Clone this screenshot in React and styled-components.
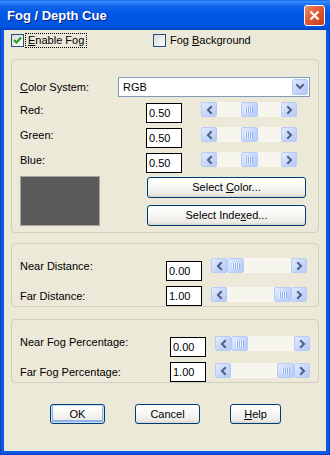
import React from "react";
import styled, { createGlobalStyle } from "styled-components";

const GlobalStyle = createGlobalStyle`
  html, body {
    margin: 0;
    padding: 0;
    background: #ffffff;
  }
  body {
    font-family: "Liberation Sans", Arial, sans-serif;
    font-size: 11px;
    color: #000;
  }
  * {
    box-sizing: border-box;
  }
`;

const Window = styled.div`
  width: 330px;
  height: 455px;
  display: flex;
  flex-direction: column;
  background: #0a3fc4;
`;

const TitleBar = styled.div`
  height: 30px;
  flex: none;
  display: flex;
  align-items: center;
  justify-content: space-between;
  padding: 0 5px 0 7px;
  background: linear-gradient(
    180deg,
    #0a5ee8 0%,
    #3c8ffb 4%,
    #2a7ff5 10%,
    #0f62ea 22%,
    #0056e4 50%,
    #0055e2 80%,
    #0150d8 92%,
    #003fbd 100%
  );
`;

const Title = styled.span`
  color: #fff;
  font-weight: bold;
  font-size: 13px;
  text-shadow: 1px 1px 0 #0a1f8a;
  letter-spacing: 0;
`;

const CloseButton = styled.div`
  width: 21px;
  height: 21px;
  border: 1px solid #fff;
  border-radius: 3px;
  background: linear-gradient(135deg, #ec8b6a 0%, #e05a35 45%, #cb3b17 100%);
  display: flex;
  align-items: center;
  justify-content: center;
`;

const Client = styled.div`
  flex: 1;
  display: flex;
  flex-direction: column;
  background: #ece9d8;
  margin: 0 1px 1px;
  border: 3px solid #0b58e4;
  border-top: 0;
  padding: 4px 7px 0;
`;

const CheckRow = styled.div`
  display: grid;
  grid-template-columns: 142px auto;
  height: 13px;
  align-items: center;
`;

const CheckItem = styled.label`
  display: flex;
  align-items: center;
  gap: 2px;
`;

const Box = styled.span`
  width: 13px;
  height: 13px;
  flex: none;
  border: 1px solid #1c5180;
  background: linear-gradient(135deg, #dcdcd7 0%, #f0f0ec 60%, #ffffff 100%);
  display: flex;
  align-items: center;
  justify-content: center;
`;

const CheckText = styled.span`
  padding: 0 2px;
  line-height: 13px;
  outline: ${(p) => (p.$focus ? "1px dotted #000" : "none")};
  outline-offset: 0;
`;

const Group = styled.div`
  margin-top: ${(p) => p.$mt}px;
  height: ${(p) => p.$h}px;
  flex: none;
  border: 1px solid #d0d0bf;
  border-radius: 4px;
  padding: 17px 8px 0;
  display: flex;
  flex-direction: column;
`;

const ComboRow = styled.div`
  display: flex;
  align-items: center;
  height: 20px;
`;

const Label = styled.span`
  width: ${(p) => p.$w}px;
  flex: none;
  line-height: 13px;
  white-space: nowrap;
  margin-top: ${(p) => p.$dy || 0}px;
`;

const Combo = styled.div`
  width: 192px;
  height: 20px;
  border: 1px solid #7f9db9;
  background: #fff;
  display: flex;
  align-items: center;
  justify-content: space-between;
  padding: 0 1px 0 4px;
`;

const ComboArrow = styled.div`
  width: 16px;
  height: 16px;
  border: 1px solid #b4c8f5;
  border-radius: 2px;
  background: linear-gradient(135deg, #e2ebfe 0%, #c6d6fb 50%, #b3c8f6 100%);
  display: flex;
  align-items: center;
  justify-content: center;
`;

const Row = styled.div`
  display: flex;
  align-items: flex-start;
  height: 20px;
  margin-top: ${(p) => p.$mt}px;
`;

const ValueBox = styled.div`
  width: 36px;
  height: ${(p) => p.$h || 20}px;
  flex: none;
  border: 1px solid #000;
  background: #fff;
  padding: 0 2px;
  line-height: ${(p) => (p.$h || 20) - 2}px;
`;

const ScrollBar = styled.div`
  width: ${(p) => p.$w}px;
  height: 15px;
  flex: none;
  margin-left: ${(p) => p.$ml}px;
  margin-top: ${(p) => p.$dy}px;
  display: flex;
`;

const ScrollArrow = styled.div`
  width: 16px;
  height: 15px;
  flex: none;
  border: 1px solid #b7cbf6;
  border-radius: 2px;
  background: linear-gradient(135deg, #e4ecfe 0%, #c9d8fb 50%, #b6cbf7 100%);
  display: flex;
  align-items: center;
  justify-content: center;
`;

const Track = styled.div`
  flex: 1;
  display: flex;
  background: repeating-conic-gradient(#f1efe4 0 25%, #fcfcf9 0 50%) 0 0 / 2px 2px;
`;

const Spacer = styled.div`
  flex: ${(p) => p.$grow} 1 0;
`;

const Thumb = styled.div`
  width: 17px;
  height: 15px;
  flex: none;
  border: 1px solid #b7cbf6;
  border-radius: 2px;
  background: linear-gradient(135deg, #e4ecfe 0%, #c9d8fb 50%, #b6cbf7 100%);
  display: flex;
  align-items: center;
  justify-content: center;
`;

const Grip = styled.div`
  width: 8px;
  height: 6px;
  background: repeating-linear-gradient(90deg, #eef4fe 0 1px, #8cb0f8 1px 2px);
`;

const ColorArea = styled.div`
  display: flex;
  margin-top: 3px;
`;

const Swatch = styled.div`
  width: 80px;
  height: 50px;
  flex: none;
  background: #5b5b5b;
  border: 1px solid #a7a69a;
`;

const ButtonStack = styled.div`
  display: flex;
  flex-direction: column;
  gap: 7px;
  margin: 1px 0 0 47px;
`;

const Button = styled.div`
  width: ${(p) => p.$w}px;
  height: ${(p) => p.$h || 21}px;
  border: 1px solid #003c74;
  border-radius: 3px;
  background: linear-gradient(180deg, #ffffff 0%, #f7f7f4 45%, #ecebe6 85%, #d8d4ca 100%);
  box-shadow: ${(p) =>
    p.$default
      ? "inset 0 0 0 1px #cde0fb, inset 0 -1px 0 2px #8fb2e8"
      : "none"};
  display: flex;
  align-items: center;
  justify-content: center;
  line-height: 13px;
`;

const ButtonRow = styled.div`
  display: flex;
  gap: 30px;
  margin-top: 21px;
  padding-left: 39px;
`;

const Arrow = ({ dir }) => {
  const d = dir === "left" ? "M9 4 L6 7 L9 10" : "M6 4 L9 7 L6 10";
  return (
    <svg width="14" height="13" viewBox="0 0 14 13">
      <path d={d} fill="none" stroke="#4d6185" strokeWidth="2" strokeLinecap="square" />
    </svg>
  );
};

const Slider = ({ width, ml, dy, value }) => (
  <ScrollBar $w={width} $ml={ml} $dy={dy}>
    <ScrollArrow>
      <Arrow dir="left" />
    </ScrollArrow>
    <Track>
      <Spacer $grow={value} />
      <Thumb>
        <Grip />
      </Thumb>
      <Spacer $grow={1 - value} />
    </Track>
    <ScrollArrow>
      <Arrow dir="right" />
    </ScrollArrow>
  </ScrollBar>
);

const colorRows = [
  { label: "Red:", value: "0.50", mt: 6 },
  { label: "Green:", value: "0.50", mt: 5 },
  { label: "Blue:", value: "0.50", mt: 5 },
];

const distanceRows = [
  { label: "Near Distance:", value: "0.00", pos: 0, mt: 0, dy: -1, sdy: -3 },
  { label: "Far Distance:", value: "1.00", pos: 1, mt: 5, dy: 4, sdy: 1 },
];

const percentRows = [
  { label: "Near Fog Percentage:", value: "0.00", pos: 0, mt: 0, dy: -1, sdy: -1 },
  { label: "Far Fog Percentage:", value: "1.00", pos: 1, mt: 5, dy: 4, sdy: 1 },
];

export default function App() {
  return (
    <>
      <GlobalStyle />
      <Window>
        <TitleBar>
          <Title>Fog / Depth Cue</Title>
          <CloseButton>
            <svg width="11" height="11" viewBox="0 0 11 11">
              <path d="M1.5 1.5 L9.5 9.5 M9.5 1.5 L1.5 9.5" stroke="#fff" strokeWidth="2.2" />
            </svg>
          </CloseButton>
        </TitleBar>
        <Client>
          <CheckRow>
            <CheckItem>
              <Box>
                <svg width="9" height="9" viewBox="0 0 9 9">
                  <path d="M1 4 L3.5 6.5 L8 1.5" fill="none" stroke="#21a121" strokeWidth="2.2" />
                </svg>
              </Box>
              <CheckText $focus>
                <u>E</u>nable Fog
              </CheckText>
            </CheckItem>
            <CheckItem>
              <Box />
              <CheckText>
                Fog <u>B</u>ackground
              </CheckText>
            </CheckItem>
          </CheckRow>

          <Group $mt={12} $h={174}>
            <ComboRow>
              <Label $w={98}>
                <u>C</u>olor System:
              </Label>
              <Combo>
                <span>RGB</span>
                <ComboArrow>
                  <svg width="12" height="10" viewBox="0 0 12 10">
                    <path d="M3 3 L6 6 L9 3" fill="none" stroke="#4d6185" strokeWidth="2" strokeLinecap="square" />
                  </svg>
                </ComboArrow>
              </Combo>
            </ComboRow>
            {colorRows.map((r) => (
              <Row key={r.label} $mt={r.mt}>
                <Label $w={126} $dy={1}>
                  {r.label}
                </Label>
                <ValueBox>{r.value}</ValueBox>
                <Slider width={96} ml={19} dy={-1} value={0.5} />
              </Row>
            ))}
            <ColorArea>
              <Swatch />
              <ButtonStack>
                <Button $w={159}>
                  <span>
                    Select <u>C</u>olor...
                  </span>
                </Button>
                <Button $w={159}>
                  <span>
                    Select Inde<u>x</u>ed...
                  </span>
                </Button>
              </ButtonStack>
            </ColorArea>
          </Group>

          <Group $mt={10} $h={64}>
            {distanceRows.map((r) => (
              <Row key={r.label} $mt={r.mt}>
                <Label $w={146} $dy={r.dy}>
                  {r.label}
                </Label>
                <ValueBox>{r.value}</ValueBox>
                <Slider width={96} ml={9} dy={r.sdy} value={r.pos} />
              </Row>
            ))}
          </Group>

          <Group $mt={12} $h={64}>
            {percentRows.map((r) => (
              <Row key={r.label} $mt={r.mt}>
                <Label $w={150} $dy={r.dy}>
                  {r.label}
                </Label>
                <ValueBox>{r.value}</ValueBox>
                <Slider width={95} ml={9} dy={r.sdy} value={r.pos} />
              </Row>
            ))}
          </Group>

          <ButtonRow>
            <Button $w={55} $h={20} $default>
              OK
            </Button>
            <Button $w={65} $h={20}>
              Cancel
            </Button>
            <Button $w={51} $h={20}>
              <span>
                <u>H</u>elp
              </span>
            </Button>
          </ButtonRow>
        </Client>
      </Window>
    </>
  );
}
